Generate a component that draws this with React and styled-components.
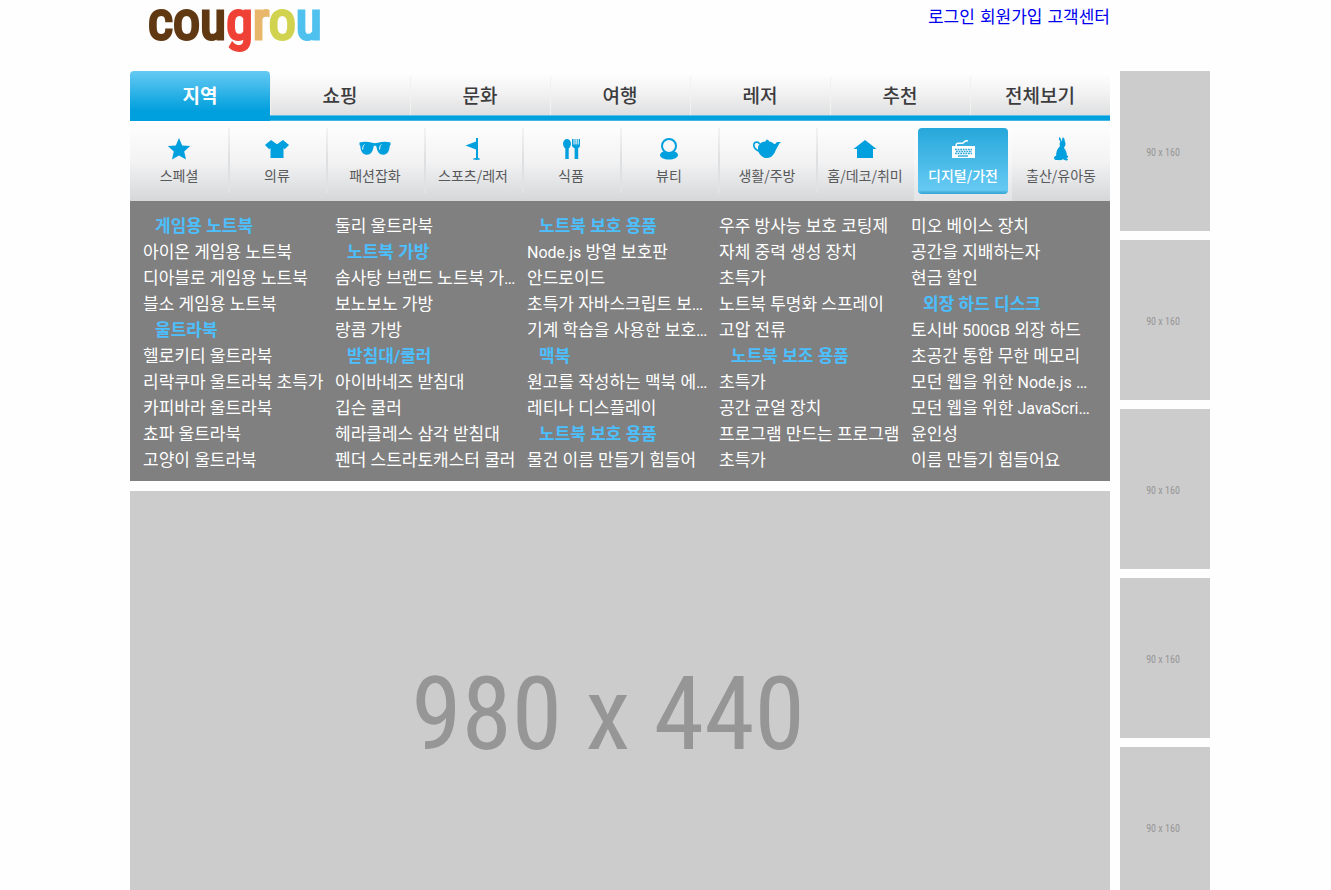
import React from "react";
import styled, { createGlobalStyle, css } from "styled-components";

const GlobalStyle = createGlobalStyle`
  * { box-sizing: border-box; }
  body {
    margin: 0;
    background: #fefefe;
    font-family: Roboto, "Noto Sans CJK KR", sans-serif;
    font-size: 17px;
  }
  ul { list-style: none; margin: 0; padding: 0; }
  a { text-decoration: none; }
`;

const Page = styled.div`
  max-width: 1089px;
  margin: 0 auto;
  padding-left: 9px;
`;

const Header = styled.header`
  display: flex;
  justify-content: space-between;
  align-items: flex-start;
  height: 71px;
  padding: 0 100px 0 18px;
`;

const Logo = styled.h1`
  margin: 0;
  font: 400 54px/42px "Roboto Condensed", "Liberation Sans", sans-serif;
`;

const LogoPart = styled.span`
  color: ${(p) => p.$color};
  -webkit-text-stroke: 3px ${(p) => p.$color};
`;

const UserLinks = styled.ul`
  display: flex;
  gap: 5px;
  padding-top: 4px;
  line-height: 26px;
  a { color: #0000ee; }
`;

const Body = styled.div`
  display: grid;
  grid-template-columns: minmax(0, 1fr) 90px;
  gap: 10px;
`;

const Tabs = styled.ul`
  display: flex;
  align-items: flex-end;
  height: 50px;
  background: linear-gradient(#fefefe 44px, #5bbfe8 44px, #5bbfe8 45px, #009fdd 45px, #009fdd 49px, #46b7e4 49px);
`;

const TabItem = styled.li`
  flex: 1;
  align-self: stretch;
  display: flex;
  padding: ${(p) => (p.$active ? "0" : "4px 0 6px")};
`;

const TabLink = styled.a`
  flex: 1;
  text-align: center;
  font-family: "Noto Sans CJK KR", sans-serif;
  font-size: 19px;
  font-weight: 500;
  line-height: 40px;
  color: #3c3c3e;
  background: linear-gradient(#fdfdfd, #f2f2f2 45%, #dedfe0);
  border-left: 1px solid #f1f1f1;
  border-radius: 4px 4px 0 0;
  padding-right: 1px;
  ${(p) =>
    p.$active &&
    css`
      color: #fff;
      font-weight: 700;
      line-height: 48px;
      border: 0;
      padding: 0;
      background: linear-gradient(#66caf3, #009fdd 40px);
    `}
`;

const Categories = styled.ul`
  display: grid;
  grid-template-columns: repeat(10, minmax(0, 1fr));
  height: 80px;
  background: linear-gradient(#fff, #f3f3f4 50%, #d5d7d9);
`;

const CategoryItem = styled.li`
  position: relative;
  padding: ${(p) => (p.$active ? "7px 4px" : "7px 0")};
  background: ${(p) => (p.$active ? "rgba(255,255,255,.3)" : "none")};
  & + &::before {
    content: "";
    position: absolute;
    left: 0;
    top: 7px;
    width: 2px;
    height: 65px;
    background: linear-gradient(#f4f4f4, #dedfe0 50%, #e2e3e4);
  }
`;

const CategoryLink = styled.a`
  display: flex;
  flex-direction: column;
  align-items: center;
  height: 66px;
  padding-top: 8px;
  font-family: "Noto Sans CJK KR", sans-serif;
  font-size: 14px;
  line-height: 26px;
  white-space: nowrap;
  color: #58595b;
  svg { display: block; color: #009fdd; }
  ${(p) =>
    p.$active &&
    css`
      color: #fff;
      font-weight: 500;
      border-radius: 4px;
      background: linear-gradient(#26a7da, #66caf3 62px, #3aa9d8 65px);
      svg { color: #fff; }
    `}
`;

const Menu = styled.ul`
  display: grid;
  grid-auto-flow: column;
  grid-template-rows: repeat(10, 26px);
  grid-template-columns: repeat(5, minmax(0, 1fr));
  padding: 10px;
  background: #808080;
`;

const MenuItem = styled.li`
  padding: 0 7px 0 3px;
`;

const MenuLink = styled.a`
  display: block;
  overflow: hidden;
  text-overflow: ellipsis;
  white-space: nowrap;
  padding-top: 1px;
  line-height: 28px;
  color: #fff;
  ${(p) =>
    p.$heading &&
    css`
      padding-left: 12px;
      color: #4cbfff;
      font-weight: 700;
    `}
`;

const Latin = styled.span`
  font-size: 16px;
`;

const Placeholder = styled.div`
  display: flex;
  align-items: center;
  justify-content: center;
  background: #ccc;
  color: #969696;
  font-family: "Roboto Condensed", "Liberation Sans", sans-serif;
`;

const Banner = styled(Placeholder)`
  height: 440px;
  margin-top: 10px;
  padding: 6px 24px 0 0;
  font-size: 102px;
`;

const SideBanner = styled(Placeholder)`
  height: 160px;
  padding: 2px 4px 0 0;
  font-size: 10px;
`;

const Side = styled.aside`
  display: flex;
  flex-direction: column;
  gap: 9px;
`;

const icons = {
  star: <path d="M20 2l3.2 7.4 8 .7-6 5.4 1.8 8L20 19.500l-7 4 1.800-8-6-5.400 8-.7z" />,
  shirt: <path d="M14 4l6 4.300L26 4l6 5-4.300 4.200-1.200-1.200V22h-13V12l-1.300 1.200L8 9z" />,
  glasses: (
    <>
      <path d="M4.500 6.500c4.500-1 8.500-.8 12.500.3 2 .5 4 .5 6 0 4-1.100 8-1.300 12.500-.3v2.600l-.8.700c-.3 5.500-2.300 9-6.400 9-4 0-6.300-3.300-6.800-8-.2-1.500-2.800-1.500-3 0-.5 4.700-2.800 8-6.800 8-4.100 0-6.100-3.500-6.400-9l-.8-.7z" />
      <path d="M7.700 13.500c0-2.300.5-4 1.700-5M24.600 13.500c0-2.300.5-4 1.700-5" fill="none" stroke="#fff" strokeWidth="1" />
    </>
  ),
  flag: <path d="M23 2h2v20c1.300.2 2 .6 2 1.100 0 .6-1.600.9-3.500.9s-3.500-.3-3.500-.9c0-.5.900-.9 3-1.100v-8.500L12.500 9.500 23 5.500z" />,
  food: (
    <>
      <ellipse cx="16" cy="7.800" rx="4" ry="4.800" />
      <path d="M14.300 11h3.400v12h-3.400zM21 3h1.500v5.500h1V3h1v5.500h1.200V3h1v5.500h1V3h1.300v6.500c0 1.400-.8 2.200-1.800 2.500v11h-3.600V12c-1.500-.3-2.600-1.200-2.600-2.500z" />
    </>
  ),
  mirror: (
    <>
      <circle cx="20" cy="10" r="7" fill="none" stroke="currentColor" strokeWidth="2" />
      <path d="M14.500 15.500c3 2.500 8 2.500 11 0 2 .7 3.500 1.900 3.500 3.500 0 2.700-4 4.500-9 4.500s-9-1.800-9-4.500c0-1.600 1.500-2.800 3.500-3.500z" />
    </>
  ),
  teapot: (
    <>
      <path d="M14 16C8 14 6 10.500 7 7.800c1-2.500 4.500-2.200 5.500 0" fill="none" stroke="currentColor" strokeWidth="1.700" />
      <path d="M18.500 5.500c0-2.300 3.500-2.300 3.500 0 2 .3 3.700 1 4.800 2.200 1.600 1 2.400-.9 3.200-1.700h4c-2 1.200-3.200 4.500-5.200 8-1.200 3.500-3.800 8-8.800 8-5.200 0-9-4.500-9-9.500 0-4.300 3-6.500 7.500-7z" />
    </>
  ),
  house: <path d="M20 4l11.500 9H28v9H12v-9H8.500z" />,
  keyboard: (
    <>
      <path d="M13 10.500c0-5.500 4-2.300 7-3.500 2-.9 1.500-3 5-2" fill="none" stroke="currentColor" strokeWidth="1.500" />
      <path d="M9 10h23v12H9z" />
      <path d="M12 13.500h17M13 15.500h16M12 17.500h17" stroke="#2fa9da" strokeWidth="1.400" strokeDasharray="1.800 .8" />
      <path d="M15 20h10" stroke="#2fa9da" strokeWidth="1.400" />
    </>
  ),
  rabbit: <path d="M18 1c1.600.8 2.200 2.500 2.700 4.700L21.500 1.500c1.500-.1 2.300 1.300 2.200 3.500.8 1.700 1.200 3.300.4 4.800-.5 1-1.100 1.300-1 2.200 1.800 2.500 2.900 5 2.700 7.300.6.100 1.500.6 1.200 1.700-.3 1-1.200 1-1.800 1.200l1.600.8c.4 1-.5 1.700-1.800 1.500l-3-1.200c-1.500.9-3.500 1-5.500.8-2.200.2-3.600-.9-3.400-2.400.1-1.300 1-1.800 2-1.700 0-4 1-7 3.900-9.700-.6-1.600-.4-3.300.3-4.800C18.200 4 17.700 2.500 18 1z" />,
};

const Icon = ({ name }) => (
  <svg width="40" height="26" viewBox="0 0 40 26" fill="currentColor" aria-hidden="true">
    {icons[name]}
  </svg>
);

const userLinks = ["로그인", "회원가입", "고객센터"];
const tabs = ["지역", "쇼핑", "문화", "여행", "레저", "추천", "전체보기"];

const categories = [
  ["star", "스페셜"],
  ["shirt", "의류"],
  ["glasses", "패션잡화"],
  ["flag", "스포츠/레저"],
  ["food", "식품"],
  ["mirror", "뷰티"],
  ["teapot", "생활/주방"],
  ["house", "홈/데코/취미"],
  ["keyboard", "디지털/가전"],
  ["rabbit", "출산/유아동"],
];

// A leading "#" marks a group heading.
const products = [
  "#게임용 노트북", "아이온 게임용 노트북", "디아블로 게임용 노트북", "블소 게임용 노트북",
  "#울트라북", "헬로키티 울트라북", "리락쿠마 울트라북 초특가", "카피바라 울트라북", "쵸파 울트라북", "고양이 울트라북",
  "둘리 울트라북", "#노트북 가방", "솜사탕 브랜드 노트북 가방", "보노보노 가방", "랑콤 가방",
  "#받침대/쿨러", "아이바네즈 받침대", "깁슨 쿨러", "헤라클레스 삼각 받침대", "펜더 스트라토캐스터 쿨러",
  "#노트북 보호 용품", "Node.js 방열 보호판", "안드로이드", "초특가 자바스크립트 보호판", "기계 학습을 사용한 보호판",
  "#맥북", "원고를 작성하는 맥북 에어", "레티나 디스플레이", "#노트북 보호 용품", "물건 이름 만들기 힘들어",
  "우주 방사능 보호 코팅제", "자체 중력 생성 장치", "초특가", "노트북 투명화 스프레이", "고압 전류",
  "#노트북 보조 용품", "초특가", "공간 균열 장치", "프로그램 만드는 프로그램", "초특가",
  "미오 베이스 장치", "공간을 지배하는자", "현금 할인", "#외장 하드 디스크", "토시바 500GB 외장 하드",
  "초공간 통합 무한 메모리", "모던 웹을 위한 Node.js 프로그래밍", "모던 웹을 위한 JavaScript 책", "윤인성", "이름 만들기 힘들어요",
];

const withLatin = (text) =>
  text.split(/([A-Za-z0-9.]+)/).map((part, i) => (i % 2 ? <Latin key={i}>{part}</Latin> : part));

export default function App() {
  return (
    <>
      <GlobalStyle />
      <Page>
        <Header>
          <Logo>
            <LogoPart $color="#603913">cou</LogoPart>
            <LogoPart $color="#ef4136">g</LogoPart>
            <LogoPart $color="#e9b76c">r</LogoPart>
            <LogoPart $color="#d1d34f">o</LogoPart>
            <LogoPart $color="#4fc1ee">u</LogoPart>
          </Logo>
          <UserLinks>
            {userLinks.map((t) => (
              <li key={t}><a href="#">{t}</a></li>
            ))}
          </UserLinks>
        </Header>
        <Body>
          <main>
            <nav>
              <Tabs>
                {tabs.map((t, i) => (
                  <TabItem key={t} $active={i === 0}>
                    <TabLink href="#" $active={i === 0}>{t}</TabLink>
                  </TabItem>
                ))}
              </Tabs>
              <Categories>
                {categories.map(([icon, label]) => (
                  <CategoryItem key={icon} $active={icon === "keyboard"}>
                    <CategoryLink href="#" $active={icon === "keyboard"}>
                      <Icon name={icon} />
                      {label}
                    </CategoryLink>
                  </CategoryItem>
                ))}
              </Categories>
              <Menu>
                {products.map((p, i) => {
                  const heading = p.startsWith("#");
                  return (
                    <MenuItem key={i}>
                      <MenuLink href="#" $heading={heading}>
                        {withLatin(heading ? p.slice(1) : p)}
                      </MenuLink>
                    </MenuItem>
                  );
                })}
              </Menu>
            </nav>
            <Banner>980 x 440</Banner>
          </main>
          <Side>
            {[1, 2, 3, 4, 5].map((n) => (
              <SideBanner key={n}>90 x 160</SideBanner>
            ))}
          </Side>
        </Body>
      </Page>
    </>
  );
}
